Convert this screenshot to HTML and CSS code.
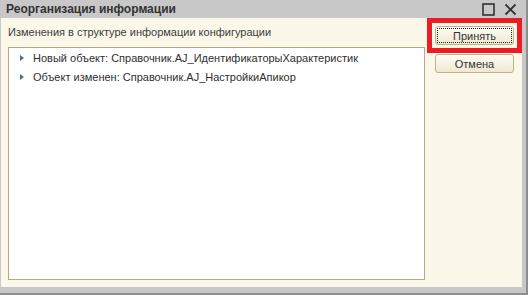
FILE: index.html
```html
<!DOCTYPE html>
<html lang="ru">

<head>
    <meta charset="UTF-8">
    <title>Реорганизация информации</title>
    <link rel="stylesheet" href="styles.css">
</head>

<body>

    <div class="window">
        <div class="titlebar">
            <span class="title">Реорганизация информации</span>
            <div class="controls">
                <svg class="ctrl" width="13" height="13" viewBox="0 0 13 13">
                    <rect x="1" y="1" width="11" height="11" fill="none" stroke="#333" stroke-width="1.6"/>
                </svg>
                <svg class="ctrl" width="13" height="13" viewBox="0 0 13 13">
                    <path d="M1.5 1.5 L11.5 11.5 M11.5 1.5 L1.5 11.5" stroke="#333" stroke-width="1.8"/>
                </svg>
            </div>
        </div>

        <div class="client">
            <div class="main">
                <label class="caption">Изменения в структуре информации конфигурации</label>
                <div class="tree">
                    <div class="item">
                        <span class="arrow"></span>
                        <span>Новый объект: Справочник.AJ_ИдентификаторыХарактеристик</span>
                    </div>
                    <div class="item">
                        <span class="arrow"></span>
                        <span>Объект изменен: Справочник.AJ_НастройкиАпикор</span>
                    </div>
                </div>
            </div>

            <div class="buttons">
                <div class="highlight">
                    <button class="btn"><span class="focus">Принять</span></button>
                </div>
                <button class="btn">Отмена</button>
            </div>
        </div>
    </div>

</body>

</html>
```

FILE: styles.css
```css
html, body {
    margin: 0;
    padding: 0;
    background: #ffffff;
}

.window {
    width: 528px;
    height: 295px;
    box-sizing: border-box;
    background: #c8c8c8;
    border-right: 2px solid #8e8e8e;
    border-bottom: 2px solid #8e8e8e;
    display: flex;
    flex-direction: column;
    font-family: "Liberation Sans", Arial, sans-serif;
    font-size: 11px;
    color: #333333;
}

.titlebar {
    height: 18px;
    display: flex;
    align-items: center;
    padding-left: 6px;
    padding-right: 9px;
}

.title {
    font-weight: bold;
    font-size: 12px;
    color: #333333;
}

.controls {
    margin-left: auto;
    display: flex;
    gap: 9px;
    padding-top: 1px;
}

.ctrl {
    display: block;
}

.client {
    flex: 1;
    margin: 0 4px 6px 1px;
    background: #fbf8ea;
    display: flex;
}

.main {
    width: 417px;
    padding: 6px 0 7px 7px;
    display: flex;
    flex-direction: column;
}

.caption {
    height: 16px;
    line-height: 16px;
    color: #3c3c3c;
}

.tree {
    flex: 1;
    margin-top: 7px;
    background: #ffffff;
    border: 1px solid #b3ab86;
}

.item {
    height: 19px;
    display: flex;
    align-items: center;
    padding-left: 11px;
    color: #2f2f2f;
}

.arrow {
    width: 0;
    height: 0;
    border-top: 3.5px solid transparent;
    border-bottom: 3.5px solid transparent;
    border-left: 4px solid #4d6f92;
    margin-right: 9px;
}

.buttons {
    padding-top: 0;
    padding-left: 2px;
    display: flex;
    flex-direction: column;
    gap: 1px;
}

.highlight {
    border: 5px solid #ec1c24;
    padding: 3px;
    width: 79px;
}

.btn {
    width: 79px;
    height: 19px;
    padding: 0;
    border: 1px solid #bdb28a;
    border-radius: 3px;
    background: linear-gradient(#fefdf6, #efe9d1);
    font-family: "Liberation Sans", Arial, sans-serif;
    font-size: 11px;
    color: #333333;
    display: flex;
    align-items: center;
    justify-content: center;
}

.buttons > .btn {
    margin-left: 8px;
}

.focus {
    display: flex;
    align-items: center;
    justify-content: center;
    width: 73px;
    height: 13px;
    border: 1px dotted #222222;
}
```
